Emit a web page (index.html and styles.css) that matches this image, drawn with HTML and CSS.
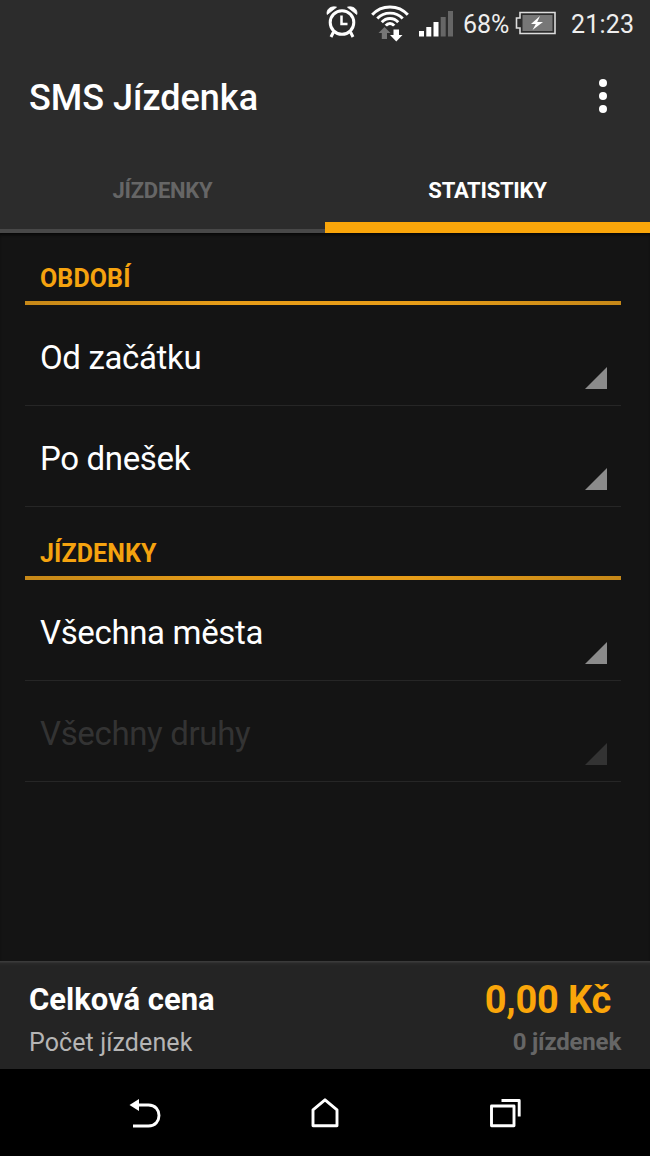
FILE: index.html
```
<!DOCTYPE html>
<html lang="cs">
<head>
<meta charset="utf-8">
<title>SMS Jízdenka</title>
<link rel="stylesheet" href="styles.css">
</head>
<body>
<div class="screen">
  <header class="top">
    <div class="status">
      <svg class="alarm" width="32" height="34" viewBox="0 0 32 34" fill="none" stroke="#fff">
        <circle cx="16" cy="17.5" r="11.8" stroke-width="3"/>
        <path d="M15.500 10.500V19H21.500" stroke-width="2.500"/>
        <path d="M7.500 27L5 32M24.500 27L27 32" stroke-width="3"/>
        <path d="M1.200 9.500C0 4.500 5 0.500 10.500 2.200ZM30.800 9.500C32 4.500 27 0.500 21.500 2.200Z" fill="#fff" stroke="#fff" stroke-width="0.800"/>
      </svg>
      <svg class="wifi" width="38" height="38" viewBox="0 0 38 38" fill="none" stroke="#fff" stroke-width="2.900">
        <path d="M1.200 10.800C10.500 0.300 27.500 0.300 36.800 10.800M6.300 14.600C13 7.300 25 7.300 31.700 14.600M10.800 18.300C15.200 13.300 22.800 13.300 27.200 18.300M14.800 21.700C17 18.700 21 18.700 23.200 21.700"/>
        <path d="M13.500 23L19.500 29H16V35H10.800V29H7.500Z" fill="#777" stroke="none"/>
        <path d="M22.500 25.500H28V31H31.500L25.300 37.500L19 31H22.500Z" fill="#fff" stroke="none"/>
      </svg>
      <svg class="signal" width="36" height="28" viewBox="0 0 36 28" fill="#fff">
        <path d="M0 21h5v5.500H0zM7.300 17h5v9.500h-5zM14.500 12h5v14.500h-5z"/>
        <path d="M21.700 7h5v19.500h-5zM29 1h5v25.500h-5z" fill="#666"/>
      </svg>
      <span class="percent">68%</span>
      <svg class="battery" width="42" height="24" viewBox="0 0 42 24">
        <path d="M5 1.500H40V22.500H5V17H1.500V7H5Z" fill="none" stroke="#ddd" stroke-width="1.600"/>
        <rect x="7.500" y="4" width="30" height="16" fill="#777"/>
        <path d="M25 5L16 13H20.800L17.500 19L28 11H22.200Z" fill="#fff"/>
      </svg>
      <span class="clock">21:23</span>
    </div>
    <div class="appbar">
      <h1 class="title">SMS Jízdenka</h1>
      <div class="menu"><i></i><i></i><i></i></div>
    </div>
    <nav class="tabs">
      <div class="tab">JÍZDENKY</div>
      <div class="tab active">STATISTIKY</div>
    </nav>
  </header>
  <main class="content">
    <h2 class="section">OBDOBÍ</h2>
    <div class="row"><span>Od začátku</span><svg class="corner" viewBox="0 0 22 22"><path d="M22 0V22H0Z"/></svg></div>
    <div class="row"><span>Po dnešek</span><svg class="corner" viewBox="0 0 22 22"><path d="M22 0V22H0Z"/></svg></div>
    <h2 class="section second">JÍZDENKY</h2>
    <div class="row"><span>Všechna města</span><svg class="corner" viewBox="0 0 22 22"><path d="M22 0V22H0Z"/></svg></div>
    <div class="row disabled"><span>Všechny druhy</span><svg class="corner" viewBox="0 0 22 22"><path d="M22 0V22H0Z"/></svg></div>
  </main>
  <footer class="summary">
    <div class="line total"><span class="label">Celková cena</span><span class="price">0,00 Kč</span></div>
    <div class="line count"><span class="label">Počet jízdenek</span><span class="amount">0 jízdenek</span></div>
  </footer>
  <nav class="navbar">
    <svg width="34" height="32" viewBox="0 0 34 32" fill="none" stroke="#fff" stroke-width="2.900">
      <path d="M10 8H20.500C34.500 8 34.500 29 20.500 29H5"/>
      <path d="M1.500 8L11 2V14Z" fill="#fff" stroke="none"/>
    </svg>
    <svg width="34" height="32" viewBox="0 0 34 32" fill="none" stroke="#fff" stroke-width="2.900" stroke-linejoin="round">
      <path d="M16 2.800L28 12.800V28.800H4V12.800Z"/>
    </svg>
    <svg width="34" height="32" viewBox="0 0 34 32" fill="none" stroke="#fff" stroke-width="2.900" stroke-linejoin="round">
      <path d="M2.500 9H25V28.800H2.500ZM12.500 3.500H30.200V19.500"/>
    </svg>
  </nav>
</div>
</body>
</html>
```

FILE: styles.css
```
* { box-sizing: border-box; }
body { margin: 0; background: #000; }
h1, h2 { margin: 0; }
svg { display: block; flex: none; }

.screen {
  width: 650px;
  height: 1156px;
  display: flex;
  flex-direction: column;
  overflow: hidden;
  background: #141414;
  color: #fff;
  font-family: Roboto, "Liberation Sans", sans-serif;
  white-space: nowrap;
}

.top { height: 233px; flex: none; background: #2c2c2c; }
.status {
  height: 48px;
  display: flex;
  align-items: center;
  padding-left: 326px;
  font-size: 25px;
  color: #eee;
}
.alarm { margin-top: -4px; }
.wifi { margin: -3px 0 0 13px; }
.signal { margin: 0 0 0 10px; }
.percent { margin-left: 8px; width: 46px; }
.battery { margin: -3px 0 0 6px; }
.clock { margin-left: 14px; letter-spacing: 0.2px; }

.appbar {
  height: 99px;
  display: flex;
  align-items: center;
  justify-content: space-between;
  padding: 0 43px 0 29px;
}
.title { font-size: 36px; font-weight: 500; }
.menu { display: flex; flex-direction: column; gap: 5px; margin-top: -4px; }
.menu i { width: 8px; height: 8px; border-radius: 50%; background: #fff; }

.tabs { height: 86px; display: flex; align-items: stretch; }
.tab {
  flex: 1;
  display: flex;
  justify-content: center;
  padding-top: 30px;
  font-size: 22px;
  line-height: 27px;
  letter-spacing: -0.25px;
  font-weight: 700;
  color: #666;
  border-bottom: 4px solid #484848;
}
.tab.active { color: #fff; border-bottom: 11px solid #faa60a; }

.content {
  height: 728px;
  flex: none;
  padding: 0 29px 0 25px;
  box-shadow: inset 0 3px 3px -1px #080808;
}
.section {
  height: 72px;
  padding: 30px 15px 0;
  font-size: 25px;
  line-height: 31px;
  letter-spacing: 0.1px;
  font-weight: 700;
  color: #f5a30f;
  border-bottom: 4px solid;
  border-image: linear-gradient(90deg, #c68818, #e79d18 35%, #e79d18 65%, #c68818) 1;
}
.section.second { height: 73px; padding-top: 31px; }
.row {
  height: 101px;
  display: flex;
  justify-content: space-between;
  padding: 32px 14px 0 15px;
  font-size: 33px;
  line-height: 41px;
  letter-spacing: -0.35px;
  border-bottom: 1px solid #262626;
}
.corner { width: 22px; height: 22px; margin-top: 29.5px; fill: #8b8b8b; }
.disabled { color: #333; }
.disabled .corner { fill: #333; }

.summary {
  height: 108px;
  flex: none;
  padding: 18px 29px 0;
  background: linear-gradient(#3a3a3a 0, #3a3a3a 1px, #2a2a2a 2px, #242424 5px);
}
.line { display: flex; justify-content: space-between; align-items: center; }
.total { height: 40px; padding-right: 10px; font-weight: 700; }
.total .label { font-size: 31px; }
.price { padding-top: 2px; font-size: 38px; letter-spacing: -0.2px; color: #faa60a; }
.count { height: 46px; font-size: 25px; color: #b5b5b5; }
.count .label { letter-spacing: 0.1px; }
.amount { font-size: 24px; letter-spacing: -0.2px; font-weight: 700; color: #666; }

.navbar {
  height: 87px;
  flex: none;
  display: flex;
  justify-content: space-between;
  padding: 28px 127px 0 128px;
  background: #000;
}
```
